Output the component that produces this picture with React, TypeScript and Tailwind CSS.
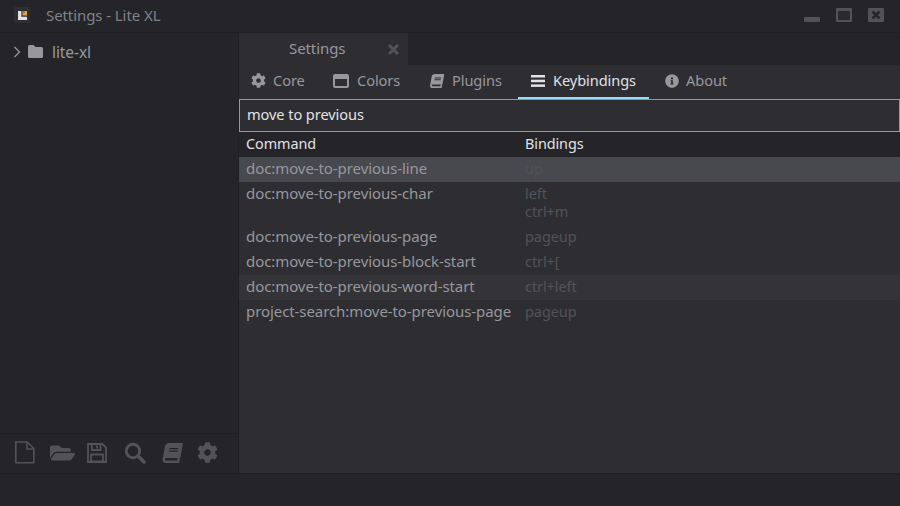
import { Fragment } from "react";

const font = "font-['Noto_Sans','Open_Sans',sans-serif]";

function Gear({ size = 16, color = "#97979c" }: { size?: number; color?: string }) {
  return (
    <svg width={size} height={size} viewBox="0 0 512 512" fill={color}>
      <path d="M487.4 315.7l-42.6-24.6c4.3-23.2 4.3-47 0-70.2l42.6-24.6c4.9-2.8 7.1-8.6 5.5-14-11.1-35.6-30-67.8-54.7-94.6-3.8-4.1-10-5.1-14.8-2.3L380.8 110c-17.9-15.4-38.5-27.3-60.8-35.1V25.8c0-5.6-3.9-10.5-9.4-11.7-36.7-8.2-74.3-7.8-109.2 0-5.5 1.2-9.4 6.1-9.4 11.7V75c-22.2 7.9-42.8 19.8-60.8 35.1L88.7 85.5c-4.9-2.8-11-1.9-14.8 2.3-24.7 26.7-43.6 58.9-54.7 94.6-1.7 5.4.6 11.2 5.5 14L67.3 221c-4.3 23.2-4.3 47 0 70.2l-42.6 24.6c-4.9 2.8-7.1 8.6-5.5 14 11.1 35.6 30 67.8 54.7 94.6 3.8 4.1 10 5.1 14.8 2.3l42.6-24.6c17.9 15.4 38.5 27.3 60.8 35.1v49.2c0 5.6 3.9 10.5 9.4 11.7 36.7 8.2 74.3 7.8 109.2 0 5.5-1.2 9.4-6.1 9.4-11.7v-49.2c22.2-7.9 42.8-19.8 60.8-35.1l42.6 24.6c4.9 2.8 11 1.9 14.8-2.3 24.7-26.7 43.6-58.9 54.7-94.6 1.5-5.5-.7-11.3-5.6-14.1zM256 336c-44.1 0-80-35.9-80-80s35.9-80 80-80 80 35.9 80 80-35.9 80-80 80z" />
    </svg>
  );
}

function Book({ w = 16, h = 16, color = "#97979c" }: { w?: number; h?: number; color?: string }) {
  return (
    <svg width={w} height={h} viewBox="0 0 540 512" fill={color}>
      <path d="M448 360V24c0-13.300-10.700-24-24-24H96C43 0 0 43 0 96v320c0 53 43 96 96 96h328c13.300 0 24-10.700 24-24v-16c0-7.500-3.500-14.300-8.900-18.700-4.200-15.400-4.200-59.300 0-74.700 5.400-4.300 8.900-11.100 8.900-18.600zM128 134c0-3.300 2.700-6 6-6h212c3.300 0 6 2.700 6 6v20c0 3.300-2.700 6-6 6H134c-3.300 0-6-2.700-6-6v-20zm0 64c0-3.300 2.700-6 6-6h212c3.300 0 6 2.700 6 6v20c0 3.300-2.700 6-6 6H134c-3.300 0-6-2.700-6-6v-20zm253.400 250H96c-17.700 0-32-14.300-32-32 0-17.600 14.400-32 32-32h285.400c-1.900 17.100-1.900 46.900 0 64z" transform="translate(90 0) skewX(-10)" />
    </svg>
  );
}

function FileIcon() {
  return (
    <svg width="21" height="23" viewBox="0 0 21 23" fill="none" stroke="#525257" strokeWidth="1.6">
      <path d="M1.800 1h11.500l6.500 6.500v14.200H1.800z" />
      <path d="M13 1v7h7" />
    </svg>
  );
}

function FolderOpen() {
  return (
    <svg width="25" height="20" viewBox="0 0 576 512" fill="#525257" preserveAspectRatio="none">
      <path d="M572.700 292.100L500.300 416.200A64 64 0 0 1 445 448H45c-18.500 0-30.100-20.100-20.700-36.100l72.400-124.200A64 64 0 0 1 152 256h400c18.500 0 30.100 20.100 20.700 36.100zM152 224h328v-48c0-26.500-21.500-48-48-48H272l-64-64H48C21.500 64 0 85.500 0 112v278l69.100-118.400C86.200 242.300 118.100 224 152 224z" />
    </svg>
  );
}

function Save() {
  return (
    <svg width="20" height="20" viewBox="0 0 20 20" fill="none" stroke="#525257" strokeWidth="1.800">
      <path d="M1 1h14.500L19 4.500V19H1z" />
      <path d="M5 1.500V7h8.500V1.500" />
      <path d="M10 2.500v3" />
      <path d="M4 11.500h12V18.500H4z" fill="none" />
    </svg>
  );
}

function Search() {
  return (
    <svg width="22" height="22" viewBox="0 0 22 22" fill="none" stroke="#525257">
      <circle cx="9" cy="9" r="6.700" strokeWidth="3" />
      <path d="M14 14l6 6" strokeWidth="3.600" strokeLinecap="round" />
    </svg>
  );
}

function WindowIcon({ color = "#97979c" }: { color?: string }) {
  return (
    <svg width="16" height="14" viewBox="0 0 16 14" fill="none" stroke={color}>
      <rect x="1" y="1" width="14" height="12" rx="1" strokeWidth="2" />
      <path d="M1 3.500h14" strokeWidth="3" />
    </svg>
  );
}

function Bars({ color = "#e1e1e6" }: { color?: string }) {
  return (
    <svg width="14" height="12" viewBox="0 0 14 12" fill={color}>
      <rect x="0" y="0" width="14" height="2.500" />
      <rect x="0" y="4.700" width="14" height="2.500" />
      <rect x="0" y="9.400" width="14" height="2.500" />
    </svg>
  );
}

function Info() {
  return (
    <svg width="14" height="14" viewBox="0 0 512 512" fill="#97979c">
      <path d="M256 8C119 8 8 119 8 256s111 248 248 248 248-111 248-248S393 8 256 8zm0 110c23.200 0 42 18.800 42 42s-18.800 42-42 42-42-18.800-42-42 18.800-42 42-42zm56 254c0 6.600-5.400 12-12 12h-88c-6.600 0-12-5.400-12-12v-24c0-6.600 5.400-12 12-12h12v-64h-12c-6.600 0-12-5.400-12-12v-24c0-6.600 5.400-12 12-12h64c6.600 0 12 5.400 12 12v100h12c6.600 0 12 5.400 12 12v24z" />
    </svg>
  );
}

const tabs = [
  { label: "Core", icon: <Gear size={15} />, cls: "w-[81px] pl-[12px] gap-[7px]" },
  { label: "Colors", icon: <WindowIcon />, cls: "w-[96px] pl-[13px] gap-[8px]" },
  { label: "Plugins", icon: <Book w={16} h={14} />, cls: "w-[102px] pl-[13px] gap-[7px]" },
  { label: "Keybindings", icon: <Bars />, cls: "w-[131px] mr-[3px] pl-[13px] gap-[8px]", active: true },
  { label: "About", icon: <Info />, cls: "w-[88px] pl-[13px] gap-[7px]" },
];

const rows = [
  { cmd: "doc:move-to-previous-line", keys: ["up"], bg: "bg-[#48484f]", h: "h-[25px]" },
  { cmd: "doc:move-to-previous-char", keys: ["left", "ctrl+m"], bg: "", h: "h-[43px]" },
  { cmd: "doc:move-to-previous-page", keys: ["pageup"], bg: "", h: "h-[25px]" },
  { cmd: "doc:move-to-previous-block-start", keys: ["ctrl+["], bg: "", h: "h-[25px]" },
  { cmd: "doc:move-to-previous-word-start", keys: ["ctrl+left"], bg: "bg-[#343438]", h: "h-[25px]" },
  { cmd: "project-search:move-to-previous-page", keys: ["pageup"], bg: "", h: "h-[25px]" },
];

export default function App() {
  return (
    <div className={`${font} flex h-[506px] w-[900px] flex-col overflow-hidden bg-[#252529] text-[15px] leading-[18px] tracking-[-0.08px] text-[#97979c]`}>
      <header className="flex h-[33px] shrink-0 items-center border-b border-[#202024] pl-[14px]">
        <div className="mb-[2px] flex h-[16px] w-[16px] items-center justify-center bg-[#2e2e32]">
          <svg width="9" height="9" viewBox="0 0 8 8">
            <path d="M0 0h3v5h5v3H0z" fill="#e1e1e6" />
            <path d="M4 0h4v4H4z" fill="#e8a33d" />
            <path d="M4 0h2v2H4z" fill="#8a7a5a" />
          </svg>
        </div>
        <span className="mb-[2px] ml-[16px] text-[#7f8288]">Settings - Lite XL</span>
        <div className="mb-[3px] ml-auto flex items-end">
          <div className="h-[5px] w-[16px] rounded-[1px] bg-[#525257]" />
          <div className="ml-[16px] h-[14px] w-[16px] rounded-[1px] border-[2px] border-t-[3px] border-[#525257] bg-[#2a2a2e]" />
          <div className="mx-[16px] flex h-[14px] w-[16px] items-center justify-center rounded-[1px] bg-[#525257]">
            <svg width="10" height="10" viewBox="0 0 10 10" stroke="#252529" strokeWidth="2.500">
              <path d="M1.500 1.500l7 7M8.500 1.500l-7 7" />
            </svg>
          </div>
        </div>
      </header>

      <div className="flex min-h-0 flex-1">
        <aside className="flex w-[239px] shrink-0 flex-col border-r border-[#202024]">
          <div className="flex h-[38px] items-center pl-[13px]">
            <svg width="8" height="12" viewBox="0 0 8 12" fill="none" stroke="#97979c" strokeWidth="1.300">
              <path d="M1.500 1l5 5-5 5" />
            </svg>
            <svg className="mb-[2px] ml-[7px]" width="15" height="13" viewBox="0 0 15 13" fill="#97979c">
              <path d="M1.500 0h4l2 2h6A1.500 1.500 0 0 1 15 3.500v8a1.500 1.500 0 0 1-1.500 1.500h-12A1.500 1.500 0 0 1 0 11.500v-10A1.500 1.500 0 0 1 1.500 0z" />
            </svg>
            <span className="ml-[9px] text-[15.5px]">lite-xl</span>
          </div>
          <div className="mt-auto flex h-[40px] items-center border-t border-[#202024] pb-[2px] pl-[14px]">
            <FileIcon />
            <span className="ml-[15px] flex"><FolderOpen /></span>
            <span className="ml-[12px] flex"><Save /></span>
            <span className="ml-[17px] flex"><Search /></span>
            <span className="ml-[15px] flex"><Book w={23} h={20} color="#525257" /></span>
            <span className="ml-[13px] flex"><Gear size={21} color="#525257" /></span>
          </div>
        </aside>

        <main className="flex min-w-0 flex-1 flex-col">
          <div className="flex h-[32px] shrink-0">
            <div className="flex w-[169px] items-center bg-[#2e2e32]">
              <span className="mb-[2px] ml-[50px]">Settings</span>
              <svg className="ml-auto mr-[9px]" width="11" height="11" viewBox="0 0 11 11" stroke="#525257" strokeWidth="3">
                <path d="M1 1l9 9M10 1l-9 9" />
              </svg>
            </div>
          </div>
          <div className="flex min-h-0 flex-1 flex-col bg-[#2e2e32]">
            <nav className="flex h-[34px] shrink-0 text-[14.6px]">
              {tabs.map((t) => (
                <div
                  key={t.label}
                  className={`flex h-[34px] items-center border-b-[2px] pb-[1px] ${t.cls} ${
                    t.active ? "border-[#93ddfa] text-[#e1e1e6]" : "border-transparent"
                  }`}
                >
                  {t.icon}
                  <span className="mb-[2px]">{t.label}</span>
                </div>
              ))}
            </nav>
            <div className="flex h-[33px] shrink-0 items-center border border-[#97979c] pb-[4px] pl-[7px] text-[14.6px] text-[#e1e1e6]">
              move to previous
            </div>
            <div className="grid shrink-0 grid-cols-[286px_1fr]">
              <div className="flex h-[25px] items-center bg-[#252529] pb-[2px] pl-[7px] text-[14.4px] text-[#e1e1e6]">Command</div>
              <div className="flex h-[25px] items-center bg-[#252529] pb-[2px] text-[14.4px] text-[#e1e1e6]">Bindings</div>
              {rows.map((r) => (
                <Fragment key={r.cmd}>
                  <div className={`pl-[7px] pt-[2px] ${r.h} ${r.bg}`}>{r.cmd}</div>
                  <div className={`pt-[2px] text-[14.5px] text-[#525257] ${r.h} ${r.bg}`}>
                    {r.keys.map((k) => (
                      <div key={k}>{k}</div>
                    ))}
                  </div>
                </Fragment>
              ))}
            </div>
          </div>
        </main>
      </div>

      <footer className="h-[33px] shrink-0 border-t border-[#202024] bg-[#252529]" />
    </div>
  );
}
